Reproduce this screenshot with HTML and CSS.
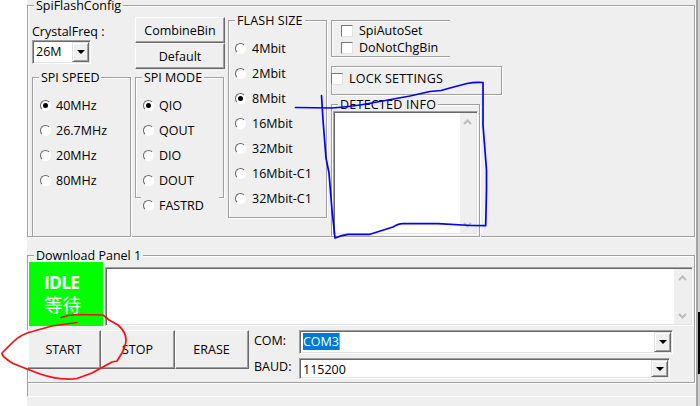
FILE: index.html
```
<!DOCTYPE html>
<html lang="en">
<head>
<meta charset="utf-8">
<title>SpiFlashConfig</title>
<link rel="stylesheet" href="styles.css">
</head>
<body>
<div class="screen">
  <main class="window">
    <section class="group config">
      <div class="legend legend-config">SpiFlashConfig</div>
      <div class="columns">
        <div class="col col-speed">
          <div class="freq-label">CrystalFreq :</div>
          <div class="combo combo-freq"><span class="value">26M</span><span class="drop"></span></div>
          <div class="group speed">
            <div class="legend">SPI SPEED</div>
            <label class="option"><i class="radio on"></i>40MHz</label>
            <label class="option"><i class="radio"></i>26.7MHz</label>
            <label class="option"><i class="radio"></i>20MHz</label>
            <label class="option"><i class="radio"></i>80MHz</label>
          </div>
        </div>
        <div class="col col-mode">
          <div class="button small">CombineBin</div>
          <div class="button small">Default</div>
          <div class="group mode">
            <div class="legend">SPI MODE</div>
            <label class="option"><i class="radio on"></i>QIO</label>
            <label class="option"><i class="radio"></i>QOUT</label>
            <label class="option"><i class="radio"></i>DIO</label>
            <label class="option"><i class="radio"></i>DOUT</label>
            <label class="option last"><i class="radio"></i>FASTRD</label>
          </div>
        </div>
        <div class="group size">
          <div class="legend">FLASH SIZE</div>
          <label class="option"><i class="radio"></i>4Mbit</label>
          <label class="option"><i class="radio"></i>2Mbit</label>
          <label class="option"><i class="radio on"></i>8Mbit</label>
          <label class="option"><i class="radio"></i>16Mbit</label>
          <label class="option"><i class="radio"></i>32Mbit</label>
          <label class="option"><i class="radio"></i>16Mbit-C1</label>
          <label class="option"><i class="radio"></i>32Mbit-C1</label>
        </div>
        <div class="col col-info">
          <div class="group auto">
            <label class="check-row"><i class="check"></i>SpiAutoSet</label>
            <label class="check-row"><i class="check"></i>DoNotChgBin</label>
          </div>
          <div class="group lock">
            <label class="check-row"><i class="check"></i>LOCK SETTINGS</label>
          </div>
          <div class="group detected">
            <div class="legend">DETECTED INFO</div>
            <div class="textarea">
              <div class="scroll">
                <svg width="9" height="6" viewBox="0 0 9 6"><path d="M1 5 4.500 1.500 8 5"/></svg>
                <svg width="9" height="6" viewBox="0 0 9 6"><path d="M1 1 4.500 4.500 8 1"/></svg>
              </div>
            </div>
          </div>
        </div>
      </div>
    </section>

    <section class="group download">
      <div class="legend legend-config">Download Panel 1</div>
      <div class="status-row">
        <div class="status"><b>IDLE</b><span>等待</span></div>
        <div class="textarea log">
          <div class="scroll">
            <svg width="9" height="6" viewBox="0 0 9 6"><path d="M1 5 4.500 1.500 8 5"/></svg>
            <svg width="9" height="6" viewBox="0 0 9 6"><path d="M1 1 4.500 4.500 8 1"/></svg>
          </div>
        </div>
      </div>
      <div class="actions">
        <div class="button">START</div>
        <div class="button">STOP</div>
        <div class="button">ERASE</div>
        <div class="port">
          <span class="port-label">COM:</span>
          <div class="combo com"><span class="value"><mark>COM3</mark></span><span class="drop"></span></div>
          <span class="port-label">BAUD:</span>
          <div class="combo baud"><span class="value">115200</span><span class="drop"></span></div>
        </div>
      </div>
    </section>
    <div class="footer"></div>
  </main>
  <div class="edge"><div class="edge-dark"></div></div>
  <svg class="ink" width="700" height="406" viewBox="0 0 700 406">
    <path class="blue" d="M295.500 107.500 332 108C352 107 366 104 377 102L410 96 430 91.500 441 90.500 450 88 467 83.500Q474 82 483 82.500L483 125 486.500 170 486.500 190 485.700 225.700 471 225.500 438 223.700H403Q399 223.500 393 227L370 234.300H348Q342 235 335 238L332 210 329 173 326 158 323 120 321.500 95.500"/>
    <path class="red" d="M61 317.500Q68 315 77 314.500L103 315 109 320 118 325Q126 332 126 340 126 345 122 353L117 361 112 362 92 373 77 378.500Q61 381 40 374L27 369 13 363.500Q1 356 2 353L13 342Q21 334 34 331L52 326 77 322.500"/>
  </svg>
</div>
</body>
</html>
```
FILE: styles.css
```
* { box-sizing: border-box; }
body {
  margin: 0;
  background: #fff;
  font: 12.5px/16px "Open Sans", "Noto Sans CJK SC", sans-serif;
  color: #000;
  white-space: nowrap;
}
.screen {
  position: relative;
  display: flex;
  width: 700px;
  height: 406px;
  padding-left: 27px;
  overflow: hidden;
}
.window {
  flex: none;
  width: 669px;
  background: #efefef;
  padding-top: 5px;
}
.edge {
  flex: none;
  width: 4px;
  padding: 312px 0 0 2px;
  background: linear-gradient(90deg, #a5a5a5 50%, #d0d0d0 50%);
}
.edge-dark { height: 62px; background: #000; }
.ink { position: absolute; left: 0; top: 0; }
.ink path { fill: none; stroke-width: 1.7; stroke-linecap: round; stroke-linejoin: round; }
.ink .blue { stroke: #0000f5; }
.ink .red { stroke: #f80d10; }

.group {
  border: 1px solid #a0a0a0;
  box-shadow: 1px 1px 0 #fff, inset 1px 1px 0 #fff;
}
.legend {
  width: max-content;
  height: 16px;
  margin: -9px 0 0 6px;
  padding: 0 2px;
  background: #efefef;
}
.legend-config { line-height: 17px; }

.config { width: 668px; height: 232px; }
.columns { display: flex; padding-left: 4px; }
.col-speed { width: 103px; padding-top: 11px; }
.freq-label { height: 16px; }
.combo {
  display: flex;
  justify-content: space-between;
  background: #fff;
  border: 1px solid;
  border-color: #a0a0a0 #fff #fff #a0a0a0;
  box-shadow: inset 1px 1px 0 #696969, inset -1px -1px 0 #e3e3e3;
  padding: 1px 1px 1px 3px;
}
.combo-freq { width: 59px; height: 24px; }
.value { line-height: 20px; }
.drop {
  width: 17px;
  display: flex;
  align-items: center;
  justify-content: center;
  background: #efefef;
  border: 1px solid;
  border-color: #e3e3e3 #696969 #696969 #e3e3e3;
  box-shadow: inset 1px 1px 0 #fff, inset -1px -1px 0 #a0a0a0;
}
.drop::after {
  content: "";
  border: 4px solid transparent;
  border-top-color: #000;
  border-bottom: 0;
}
.option {
  display: flex;
  align-items: center;
  gap: 5px;
  height: 25px;
  padding-left: 7px;
}
.legend + .option { margin-top: 8px; }
.option { line-height: 18px; }
.radio {
  position: relative;
  width: 11px;
  height: 11px;
  border-radius: 50%;
  background: #fff;
  border: 1px solid;
  border-color: #666 #fff #fff #666;
}
.radio.on::after {
  content: "";
  position: absolute;
  left: 2px;
  top: 2px;
  width: 5px;
  height: 5px;
  border-radius: 50%;
  background: #000;
}
.speed { width: 99px; height: 160px; margin-top: 13px; }
.speed .legend, .mode .legend { line-height: 18px; }
.col-mode { width: 93px; padding-top: 4px; }
.button {
  display: flex;
  align-items: center;
  justify-content: center;
  width: 74px;
  height: 39px;
  border: 1px solid;
  border-color: #fff #696969 #696969 #fff;
  box-shadow: inset -1px -1px 0 #a0a0a0;
}
.button.small { width: 90px; height: 26px; padding-top: 1px; }
.mode { width: 89px; height: 121px; margin-top: 8px; }
.option.last { width: 78px; margin-left: 5px; padding-left: 2px; background: #efefef; }
.size { width: 99px; height: 198px; margin-top: 7px; }
.size .legend { line-height: 18px; letter-spacing: 0.1px; }
.size .option { padding-left: 6px; gap: 6px; }
.size .legend + .option { margin-top: 8px; }
.col-info { padding: 7px 0 0 4px; }
.auto {
  width: 119px;
  height: 37px;
  padding: 1px 0 0 9px;
  border-right: 0;
  box-shadow: inset 1px 1px 0 #fff, 0 1px 0 #fff;
}
.check-row { display: flex; align-items: center; gap: 6px; height: 17px; }
.check {
  width: 12px;
  height: 12px;
  background: #fff;
  border: 1px solid;
  border-color: #777 #e3e3e3 #e3e3e3 #777;
}
.lock { width: 171px; height: 29px; margin-top: 9px; padding-top: 3px; letter-spacing: 0.2px; }
.lock .check-row { margin-left: -1px; }
.detected { width: 149px; height: 133px; margin-top: 9px; padding-right: 1px; }
.detected .legend { line-height: 17px; letter-spacing: 0.25px; }
.textarea {
  display: flex;
  justify-content: flex-end;
  background: #fff;
  border: 1px solid;
  border-color: #a0a0a0 #fff #fff #a0a0a0;
  box-shadow: inset 1px 1px 0 #696969, inset -1px -1px 0 #e3e3e3;
  padding: 1px;
}
.detected .textarea { height: 124px; margin: -1px 0 0 1px; }
.scroll {
  width: 16px;
  display: flex;
  flex-direction: column;
  align-items: center;
  justify-content: space-between;
  padding: 6px 1px 5px 0;
  background: #efefef;
}
.scroll path { fill: none; stroke: #bcbcbc; stroke-width: 2; }

.download { width: 668px; height: 128px; margin-top: 18px; }
.status-row { display: flex; align-items: flex-end; gap: 2px; height: 64px; margin: -1px 1px 0; }
.status {
  width: 74px;
  height: 64px;
  padding: 8px 0 0 15px;
  background: #0f0;
  color: #fff;
}
.status b { display: block; font: bold 17.5px/24px "Open Sans", sans-serif; letter-spacing: -0.8px; }
.status span { display: block; font: 18.5px/20px "Noto Sans CJK SC", sans-serif; }
.log { flex: 1; height: 59px; }
.log .scroll { width: 17px; }
.actions { display: flex; margin: 4px 0 0 -1px; }
.actions > .button { padding-right: 1px; }
.port {
  display: grid;
  grid-template-columns: 45px auto;
  grid-template-rows: 24px 20px;
  row-gap: 4px;
  margin-left: 5px;
}
.port-label { padding-top: 3px; }
.com + .port-label { padding-top: 1px; }
.com { width: 374px; height: 24px; }
.baud { width: 371px; height: 21px; }
.com .value { line-height: 20px; }
mark { display: inline-block; height: 17px; line-height: 17px; background: #0078d7; color: #fff; border-right: 1px solid #ff872a; }
.footer { height: 14px; border-left: 1px solid #a0a0a0; border-bottom: 1px solid #fff; }
```
